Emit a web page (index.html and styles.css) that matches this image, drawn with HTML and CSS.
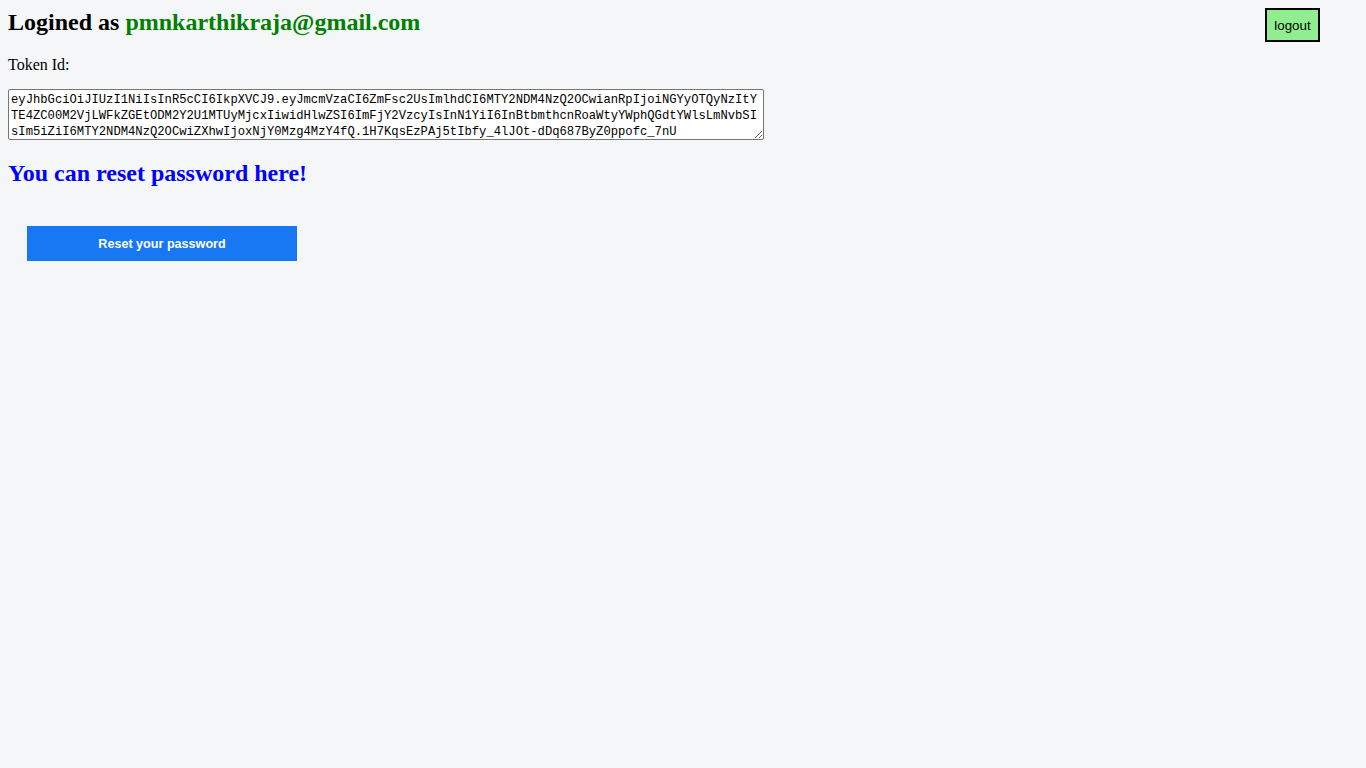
FILE: index.html
```html
<!DOCTYPE html>
<html>
<head>
<meta charset="utf-8">
<link rel="stylesheet" href="styles.css">
</head>
<body>
<div class="header">
  <h2 class="title">Logined as <span class="email">pmnkarthikraja@gmail.com</span></h2>
  <button class="logout">logout</button>
</div>
<p class="label">Token Id:</p>
<textarea class="token" readonly>eyJhbGciOiJIUzI1NiIsInR5cCI6IkpXVCJ9.eyJmcmVzaCI6ZmFsc2UsImlhdCI6MTY2NDM4NzQ2OCwianRpIjoiNGYyOTQyNzItYTE4ZC00M2VjLWFkZGEtODM2Y2U1MTUyMjcxIiwidHlwZSI6ImFjY2VzcyIsInN1YiI6InBtbmthcnRoaWtyYWphQGdtYWlsLmNvbSIsIm5iZiI6MTY2NDM4NzQ2OCwiZXhwIjoxNjY0Mzg4MzY4fQ.1H7KqsEzPAj5tIbfy_4lJOt-dDq687ByZ0ppofc_7nU</textarea>
<h2 class="reset-title">You can reset password here!</h2>
<div class="actions">
  <button class="reset-btn">Reset your password</button>
</div>
</body>
</html>
```
FILE: styles.css
```css
html, body {
  background: #f4f6f8;
}
body {
  margin: 8px;
  font-family: "Liberation Serif", "Times New Roman", serif;
  color: #000;
}
.header {
  display: flex;
  justify-content: space-between;
  align-items: flex-start;
  padding-right: 38px;
}
.title {
  margin: 0;
  font-size: 24px;
  font-weight: bold;
  line-height: 28px;
}
.email {
  color: #008000;
}
.logout {
  margin: 0;
  width: 55px;
  height: 34px;
  background: #90ee90;
  border: 2px solid #000;
  font-family: "Liberation Sans", Arial, sans-serif;
  font-size: 13.33px;
  color: #000;
  padding: 0;
  border-radius: 0;
}
.label {
  margin: 14px 0 15px 0;
  font-size: 16px;
  line-height: 18px;
}
.token {
  display: block;
  box-sizing: border-box;
  width: 756px;
  height: 51px;
  margin: 0;
  padding: 2px;
  border: 1px solid #767676;
  border-radius: 2px;
  background: #fff;
  font-family: "Liberation Mono", "DejaVu Sans Mono", monospace;
  font-size: 12.2px;
  line-height: 16px;
  color: #000;
  resize: both;
  overflow: hidden;
  word-break: break-all;
}
.reset-title {
  margin: 19px 0 0 0;
  font-size: 24px;
  line-height: 28px;
  font-weight: bold;
  color: #0000ff;
}
.actions {
  padding: 39px 0 0 19px;
}
.reset-btn {
  display: block;
  width: 270px;
  height: 35px;
  background: #1877f2;
  color: #fff;
  border: none;
  font-family: "Liberation Sans", Arial, sans-serif;
  font-size: 12.6px;
  font-weight: bold;
  padding: 0;
  cursor: pointer;
}
```
